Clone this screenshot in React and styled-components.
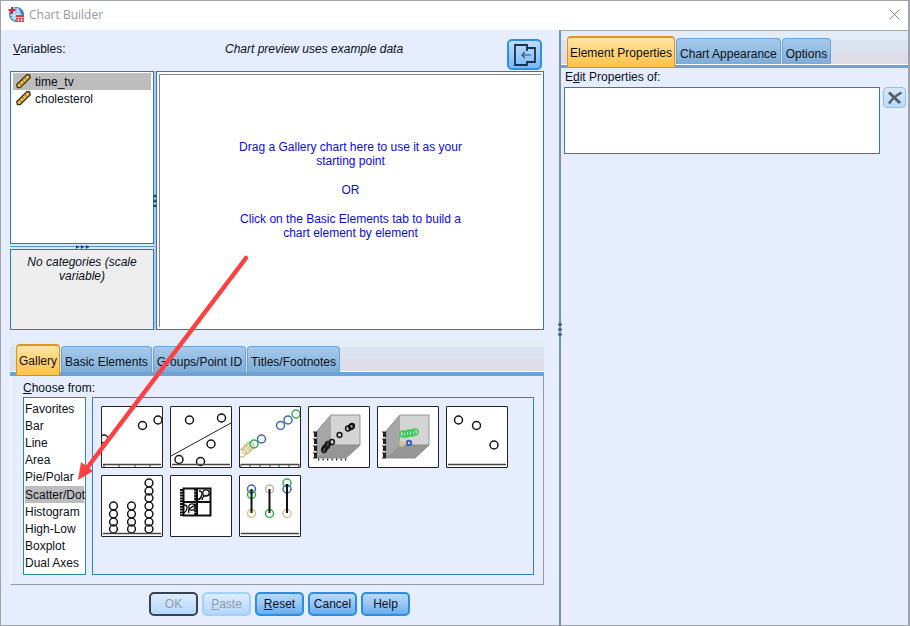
import React from "react";
import styled, { createGlobalStyle } from "styled-components";

const Global = createGlobalStyle`
  *, *::before, *::after { box-sizing: border-box; }
  html, body { margin: 0; padding: 0; }
  body, button { font: 12px/14px "Liberation Sans", Arial, sans-serif; color: #0c1018; }
  ul { list-style: none; margin: 0; padding: 0; }
  p, h1 { margin: 0; }
`;

const Window = styled.div`
  position: relative;
  display: flex;
  flex-direction: column;
  min-height: 100vh;
  background: #e5edff;
  border: 1px solid #a0a4aa;
  border-right-width: 2px;
`;

const TitleBar = styled.header`
  display: flex;
  align-items: center;
  gap: 4px;
  height: 29px;
  padding: 0 8px 2px 7px;
  background: #fff;
`;

const Title = styled.h1`
  flex: 1;
  font: 12px/16px "Open Sans", "Noto Sans", sans-serif;
  color: #999;
`;

const CloseButton = styled.button`
  display: flex;
  padding: 0;
  border: 0;
  background: none;
`;

const Body = styled.div`
  flex: 1;
  display: grid;
  grid-template-columns: minmax(0, 558fr) minmax(0, 349fr);
`;

const MainPane = styled.main`
  display: flex;
  flex-direction: column;
  padding: 9px 15px 9px 9px;
`;

const HeaderRow = styled.div`
  display: grid;
  grid-template-columns: 146px 1fr auto;
  align-items: start;
  padding: 0 2px 0 3px;
  height: 32px;
`;

const FieldLabel = styled.span`
  display: block;
  padding-top: 3px;
`;

const PreviewNote = styled.em`
  padding: 3px 0 0 66px;
`;

const PreviewToggle = styled.button`
  display: flex;
  align-items: center;
  justify-content: center;
  width: 35px;
  height: 31px;
  padding: 0;
  border: 2px solid #2b90e6;
  border-radius: 5px;
  background: linear-gradient(#c0dcfb, #9ccbf7 50%, #7bb8f3);
`;

const Workspace = styled.div`
  display: grid;
  grid-template-columns: 144px 2px minmax(0, 1fr);
  height: 259px;
`;

const VariablesColumn = styled.div`
  display: grid;
  grid-template-rows: 173px 5px 81px;
`;

const VariableList = styled.ul`
  border: 1px solid #2f78c0;
  background: #fff;
  padding: 1px 2px;
`;

const VariableRow = styled.li`
  display: flex;
  align-items: center;
  gap: 4px;
  height: 17px;
  padding-left: 3px;
  background: ${(p) => (p.$selected ? "#bdbdbd" : "transparent")};
`;

const Splitter = styled.div`
  display: flex;
  align-items: center;
  justify-content: center;
  background: ${(p) => (p.$vertical ? "#a8cdf0" : "linear-gradient(#d4eafd 0 40%, #5a93cc 40% 60%, #d4eafd 60%)")};
  svg { flex: none; z-index: 1; }
`;

const Categories = styled.div`
  padding: 5px 12px;
  border: 1px solid #2f78c0;
  background: #eee;
  font-style: italic;
  text-align: center;
`;

const Canvas = styled.section`
  padding: 2px;
  border: 1px solid #2f78c0;
  background: #fff;
`;

const CanvasInner = styled.div`
  display: flex;
  flex-direction: column;
  gap: 15px;
  height: 100%;
  padding: 65px 70px 0;
  border-top: 1px solid #858585;
  border-left: 1px solid #858585;
  color: #0b0be0;
  text-align: center;
`;

const TabSection = styled.section`
  display: flex;
  flex-direction: column;
  margin-top: ${(p) => (p.$lower ? "8px" : "0")};
`;

const TabStrip = styled.div`
  display: flex;
  align-items: flex-end;
  gap: 1px;
  height: ${(p) => (p.$wide ? "37px" : "38px")};
  padding: 0 6px;
  background: linear-gradient(
    #e3edf8 0 9px, #dbe2f0 9px 21px, #dedce6 21px 33px,
    #fff 33px 34px, #6ea2d4 34px
  );
`;

const Tab = styled.button`
  height: ${(p) => (p.$active ? "31px" : "26px")};
  margin-bottom: ${(p) => (p.$active ? "1px" : "4px")};
  padding: ${(p) => (p.$active ? "0 2px" : "4px 3px 0")};
  border: 1px solid ${(p) => (p.$active ? "#e0961e" : "#6ba4d8")};
  border-top-width: ${(p) => (p.$active ? "2px" : "1px")};
  border-bottom: 0;
  border-radius: 4px 4px 0 0;
  background: ${(p) => (p.$active
    ? "linear-gradient(#ffe6a5, #ffd478 45%, #ffc247)"
    : "linear-gradient(#a6c9eb, #94bce2 50%, #7dacd9)")};
  white-space: nowrap;
`;

const GalleryPanel = styled.div`
  display: grid;
  grid-template-columns: 63px minmax(0, 1fr);
  column-gap: 6px;
  padding: 5px 9px 9px 12px;
  border-right: 1px solid #9a9a9a;
  border-bottom: 1px solid #9a9a9a;
  border-left: 1px solid #fff;
`;

const GalleryLabel = styled.span`
  grid-column: 1 / -1;
  height: 16px;
`;

const TypeList = styled.ul`
  display: grid;
  grid-template-columns: minmax(0, 1fr);
  grid-auto-rows: 1fr;
  padding: 2px 1px;
  border: 1px solid #2d8d92;
  background: #fff;
`;

const TypeRow = styled.li`
  display: flex;
  align-items: center;
  white-space: nowrap;
  background: ${(p) => (p.$selected ? "#bdbdbd" : "transparent")};
`;

const ThumbGrid = styled.div`
  display: flex;
  flex-wrap: wrap;
  align-content: flex-start;
  gap: 7px;
  min-height: 178px;
  padding: 8px;
  border: 1px solid #2f82cc;
`;

const Thumb = styled.button`
  width: 62px;
  height: 62px;
  padding: 0;
  border: 1px solid #222;
  border-radius: 1px;
  background: #fff;
  svg { display: block; }
`;

const ButtonRow = styled.footer`
  display: flex;
  justify-content: center;
  gap: 4px;
  padding: 7px 0 0 5px;
`;

const PushButton = styled.button`
  width: 49px;
  height: 24px;
  padding: 0;
  border: 2px solid ${(p) => (p.$primary ? "#39434f" : "#2b8de4")};
  border-radius: 5px;
  background: linear-gradient(#b7d8fb, #97c6f5 50%, #69aef0);
  &:disabled {
    border-color: ${(p) => (p.$primary ? "#39434f" : "#a3d0f8")};
    background: linear-gradient(#dcecff, #c9e1fc 50%, #b3d7fb);
    color: #929ba8;
  }
`;

const PropertiesPane = styled.aside`
  position: relative;
  border-left: 2px solid #7592ad;
  border-top: 1px solid #a6a9ad;
`;

const PaneGrip = styled.svg`
  position: absolute;
  left: -3px;
  top: 292px;
`;

const PropertiesContent = styled.div`
  display: grid;
  grid-template-columns: minmax(0, 1fr) 23px;
  column-gap: 3px;
  padding: 2px 2px 0 3px;
`;

const PropertiesLabel = styled.span`
  grid-column: 1 / -1;
  height: 17px;
  padding-left: 1px;
`;

const PropertyList = styled.ul`
  height: 67px;
  border: 1px solid #2f78c0;
  background: #fff;
`;

const DeleteButton = styled.button`
  display: flex;
  align-items: center;
  justify-content: center;
  height: 21px;
  padding: 0;
  border: 1px solid #92c1ec;
  border-radius: 4px;
  background: linear-gradient(#d6e8fd, #b9dafb);
`;

const ArrowOverlay = styled.svg`
  position: absolute;
  left: 70px;
  top: 250px;
  pointer-events: none;
`;

const AppIcon = () => (
  <svg width="17" height="17" viewBox="0 0 17 17" aria-hidden="true">
    <circle cx="8.5" cy="8.5" r="7.5" fill="#397fc2" />
    <ellipse cx="8" cy="8" rx="5" ry="6" fill="#9bc5e8" />
    <path d="M2 9h12M3 12h10M6 2v13M10 2v13" stroke="#dceefa" fill="none" />
    <path d="M4 1v7M0.5 4h7" stroke="#d92632" strokeWidth="2" />
    <rect x="8" y="9" width="8" height="7" fill="#d83a4a" />
    <path d="M8 11.5h8M8 14h8M10.5 11v5M13.5 11v5" stroke="#f4c7cd" strokeWidth=".8" />
  </svg>
);

const Ruler = () => (
  <svg width="15" height="15" viewBox="0 0 15 15" aria-hidden="true">
    <path d="M.8 10.6 10.8.8h2.6l.8 2.9L4.2 13.6H1.4z" fill="#f2bc45" stroke="#3f372a" strokeWidth="1.4" strokeLinejoin="round" />
    <path d="m3.4 8.8 1.6 1.8M6 6.2 7.6 8M8.6 3.6l1.6 1.8" stroke="#6b5224" />
  </svg>
);

const Grip = ({ vertical }) => (
  <svg width={vertical ? 4 : 13} height={vertical ? 13 : 4} viewBox={vertical ? "0 0 4 13" : "0 0 13 4"} aria-hidden="true">
    {[0, 5, 10].map((n) => (
      <path
        key={n}
        transform={vertical ? `translate(0 ${n})` : `translate(${n} 0)`}
        d={vertical ? "M0 3 2 .5 4 3z" : "M0 .5 3 2 0 3.5z"}
        fill="#173f7c"
        stroke="#173f7c"
        strokeWidth=".5"
      />
    ))}
  </svg>
);

const Rings = ({ points, r = 4, color = "#161616", width = 1.5 }) => (
  <g fill="none" stroke={color} strokeWidth={width}>
    {points.map(([x, y]) => <circle key={`${x}-${y}`} cx={x} cy={y} r={r} />)}
  </g>
);

const Axis = ({ ticks = [] }) => (
  <g stroke="#444">
    <path d="M1 57.5h58" strokeWidth="1.6" />
    {ticks.map((x) => <path key={x} d={`M${x} 57v3`} />)}
  </g>
);

const Cube = ({ floor }) => (
  <g>
    <path d="M8 24 22 8h29v30L37 51H8z" fill="#aaa" />
    <path d="M22 8h29v30H22z" fill="#d4d4d4" />
    <path d="M8 24 22 8v30L8 51z" fill="#a6a6a6" />
    <path d="M8 51 22 38h29L37 51z" fill="#969696" />
    <path d="M8 24 22 8h29v30L37 51H8zM22 38h29" fill="none" stroke="#808080" strokeWidth=".8" />
    <path d="M6.5 25v27" stroke="#222" strokeWidth="3" strokeDasharray="5 2" />
    <path d="M4 25h4M4 32h4M4 39h4M4 46h4M4 51h4" stroke="#222" />
    {floor && <path d="M9 52.5h29" stroke="#222" strokeWidth="2" strokeDasharray="1.3 3.2" />}
  </g>
);

const thumbnails = [
  ["Simple Scatter", <>
    <Rings points={[[2, 32], [40.5, 18.5], [56, 13]]} />
    <Axis ticks={[2, 17, 33, 48]} />
  </>],
  ["Simple Scatter with Fit Line", <>
    <Rings points={[[18.5, 13], [50.5, 11], [40, 37], [8, 52.5], [29.5, 54.5]]} />
    <path d="M0 49 60 16" stroke="#222" />
    <Axis />
  </>],
  ["Grouped Scatter", <>
    <Rings color="#cdc68d" points={[[2, 46], [6, 43], [8, 41], [10, 39]]} />
    <Rings color="#2fb34f" points={[[14, 37], [56, 7]]} />
    <Rings color="#4265b8" points={[[21.5, 32], [40.5, 18.5], [48, 13]]} />
    <Axis ticks={[1, 10, 20, 30, 39, 49, 59]} />
  </>],
  ["Simple 3-D Scatter", <>
    <Cube floor />
    <Rings r={2.4} points={[[15, 43], [16, 41], [18, 39], [19, 37], [23, 35], [30.5, 28], [39, 21.5], [42, 20], [43, 19]]} />
  </>],
  ["Grouped 3-D Scatter", <>
    <Cube />
    <Rings r={3} color="#35cf54" points={[[25, 27], [28, 27], [31, 26], [34, 26], [37, 25]]} />
    <Rings r={1.8} width={2} color="#cdc68d" points={[[24, 37]]} />
    <Rings r={2.2} width={2} color="#3763c2" points={[[31, 36]]} />
  </>],
  ["Summary Point Plot", <>
    <Rings points={[[11.5, 13], [29.5, 18.5], [47, 38]]} />
    <Axis />
  </>],
  ["Simple Dot Plot", <>
    <Rings r={3.9} points={[30, 38, 46, 53].flatMap((y) => [[11.5, y], [29.5, y]])} />
    <Rings r={3.9} points={[7, 15, 22, 30, 38, 46, 53].map((y) => [47, y])} />
    <Axis />
  </>],
  ["Scatterplot Matrix", <>
    <path d="M12.5 12.5h27v27h-27zM26 12v28M12 26h28" fill="none" stroke="#111" strokeWidth="2" />
    <path d="M11 13v27" stroke="#111" strokeWidth="4" strokeDasharray="2 .8" />
    <path d="M25 13v26" stroke="#111" strokeWidth="3.6" strokeDasharray="2.4 .6" />
    <path d="M13 29c5 0 3 6 0 8M18 37c-2-5 3-5 6-8M28 15c5 0 3 7-1 9M39 18c-4 3-7 0-8 6" fill="none" stroke="#111" strokeWidth="1.4" />
    <Rings r={3.2} points={[[21, 31], [35, 17]]} width={1.3} />
  </>],
  ["Drop-Line", <>
    <Rings color="#4265b8" points={[[11.5, 13], [47, 13]]} />
    <Rings color="#2fb34f" points={[[11.5, 18.5], [29.5, 37.5], [47, 7]]} />
    <Rings color="#b8b5a4" points={[[29.5, 13]]} />
    <Rings color="#cdc68d" points={[[11.5, 37.5], [47, 37.5]]} />
    <path d="M11.5 13v24M29.5 13v24M47 8v29" stroke="#111" strokeWidth="2" />
    <Axis />
  </>],
];

const chartTypes = ["Favorites", "Bar", "Line", "Area", "Pie/Polar", "Scatter/Dot", "Histogram", "High-Low", "Boxplot", "Dual Axes"];

const Tabs = ({ names, label, wide }) => (
  <TabStrip role="tablist" aria-label={label} $wide={wide}>
    {names.map((name, i) => (
      <Tab key={name} type="button" role="tab" aria-selected={i === 0} $active={i === 0}>{name}</Tab>
    ))}
  </TabStrip>
);

export default function App() {
  return (
    <>
      <Global />
      <Window>
        <TitleBar>
          <AppIcon />
          <Title>Chart Builder</Title>
          <CloseButton type="button" aria-label="Close">
            <svg width="11" height="11" viewBox="0 0 11 11">
              <path d="m.5.5 10 10M10.5.5l-10 10" stroke="#888" fill="none" />
            </svg>
          </CloseButton>
        </TitleBar>
        <Body>
          <MainPane>
            <HeaderRow>
              <FieldLabel id="variables-label"><u>V</u>ariables:</FieldLabel>
              <PreviewNote>Chart preview uses example data</PreviewNote>
              <PreviewToggle type="button" aria-label="Hide properties pane">
                <svg width="22" height="22" viewBox="0 0 22 22" fill="none" stroke="#17334f" strokeWidth="1.8">
                  <path d="M13 4V1H1v20h12v-4" />
                  <path d="M13 7V4h8v14h-8" />
                  <path d="M17 11H8m3-3-3 3 3 3" stroke="#2f5376" strokeWidth="1.2" />
                </svg>
              </PreviewToggle>
            </HeaderRow>
            <Workspace>
              <VariablesColumn>
                <VariableList role="listbox" aria-labelledby="variables-label">
                  <VariableRow role="option" aria-selected="true" $selected><Ruler />time_tv</VariableRow>
                  <VariableRow role="option" aria-selected="false"><Ruler />cholesterol</VariableRow>
                </VariableList>
                <Splitter><Grip /></Splitter>
                <Categories>No categories (scale variable)</Categories>
              </VariablesColumn>
              <Splitter $vertical><Grip vertical /></Splitter>
              <Canvas>
                <CanvasInner>
                  <p>Drag a Gallery chart here to use it as your starting point</p>
                  <p>OR</p>
                  <p>Click on the Basic Elements tab to build a chart element by element</p>
                </CanvasInner>
              </Canvas>
            </Workspace>
            <TabSection $lower>
              <Tabs label="Chart contents" names={["Gallery", "Basic Elements", "Groups/Point ID", "Titles/Footnotes"]} />
              <GalleryPanel>
                <GalleryLabel id="choose-label"><u>C</u>hoose from:</GalleryLabel>
                <TypeList role="listbox" aria-labelledby="choose-label">
                  {chartTypes.map((type) => (
                    <TypeRow key={type} role="option" aria-selected={type === "Scatter/Dot"} $selected={type === "Scatter/Dot"}>
                      {type}
                    </TypeRow>
                  ))}
                </TypeList>
                <ThumbGrid>
                  {thumbnails.map(([name, drawing]) => (
                    <Thumb key={name} type="button" aria-label={name}>
                      <svg width="60" height="60" viewBox="0 0 60 60">{drawing}</svg>
                    </Thumb>
                  ))}
                </ThumbGrid>
              </GalleryPanel>
            </TabSection>
            <ButtonRow>
              <PushButton type="button" disabled $primary>OK</PushButton>
              <PushButton type="button" disabled><u>P</u>aste</PushButton>
              <PushButton type="button"><u>R</u>eset</PushButton>
              <PushButton type="button">Cancel</PushButton>
              <PushButton type="button">Help</PushButton>
            </ButtonRow>
          </MainPane>
          <PropertiesPane>
            <PaneGrip width="4" height="13" viewBox="0 0 4 13" aria-hidden="true">
              <path d="M0 1.5h4M0 6.5h4M0 11.5h4" stroke="#335f91" strokeWidth="2" />
            </PaneGrip>
            <TabSection>
              <Tabs wide label="Properties" names={["Element Properties", "Chart Appearance", "Options"]} />
              <PropertiesContent>
                <PropertiesLabel id="edit-label">E<u>d</u>it Properties of:</PropertiesLabel>
                <PropertyList role="listbox" aria-labelledby="edit-label" />
                <DeleteButton type="button" aria-label="Remove element">
                  <svg width="16" height="14" viewBox="0 0 16 14" fill="none" stroke="#555c65">
                    <path d="m2 1.5 11 10.5" strokeWidth="3" />
                    <path d="M14.5 1.5C10 4 5 8 2 12.5" strokeWidth="2.4" />
                  </svg>
                </DeleteButton>
              </PropertiesContent>
            </TabSection>
          </PropertiesPane>
        </Body>
        <ArrowOverlay width="190" height="240" viewBox="71 251 190 240" aria-hidden="true">
          <path d="M246 258 87 468" stroke="#ff4040" strokeWidth="4.5" strokeLinecap="round" />
          <path d="m78 480 3-18 12 9z" fill="#ff4040" />
        </ArrowOverlay>
      </Window>
    </>
  );
}
